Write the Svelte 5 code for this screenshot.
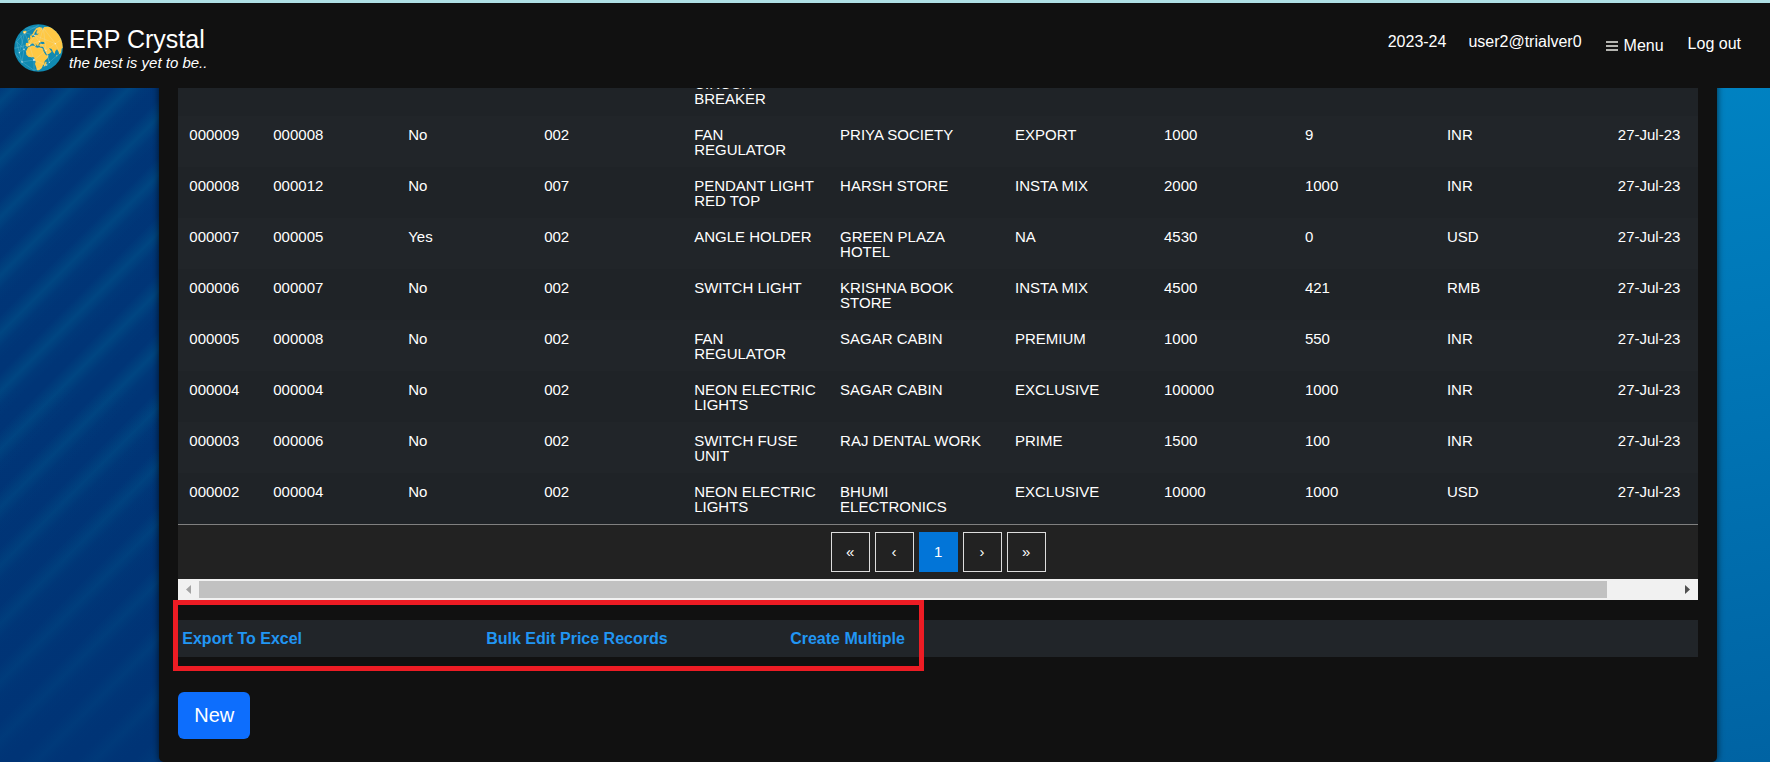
<script>
  const columns = [84, 135, 136, 150, 146, 175, 149, 141, 142, 171, 91];
  const total = columns.reduce((sum, width) => sum + width, 0);

  const rows = [
    ['', '', '', '', 'CIRCUIT BREAKER', '', '', '', '', '', ''],
    ['000009', '000008', 'No', '002', 'FAN REGULATOR', 'PRIYA SOCIETY', 'EXPORT', '1000', '9', 'INR', '27-Jul-23'],
    ['000008', '000012', 'No', '007', 'PENDANT LIGHT RED TOP', 'HARSH STORE', 'INSTA MIX', '2000', '1000', 'INR', '27-Jul-23'],
    ['000007', '000005', 'Yes', '002', 'ANGLE HOLDER', 'GREEN PLAZA HOTEL', 'NA', '4530', '0', 'USD', '27-Jul-23'],
    ['000006', '000007', 'No', '002', 'SWITCH LIGHT', 'KRISHNA BOOK STORE', 'INSTA MIX', '4500', '421', 'RMB', '27-Jul-23'],
    ['000005', '000008', 'No', '002', 'FAN REGULATOR', 'SAGAR CABIN', 'PREMIUM', '1000', '550', 'INR', '27-Jul-23'],
    ['000004', '000004', 'No', '002', 'NEON ELECTRIC LIGHTS', 'SAGAR CABIN', 'EXCLUSIVE', '100000', '1000', 'INR', '27-Jul-23'],
    ['000003', '000006', 'No', '002', 'SWITCH FUSE UNIT', 'RAJ DENTAL WORK', 'PRIME', '1500', '100', 'INR', '27-Jul-23'],
    ['000002', '000004', 'No', '002', 'NEON ELECTRIC LIGHTS', 'BHUMI ELECTRONICS', 'EXCLUSIVE', '10000', '1000', 'USD', '27-Jul-23']
  ];

  const pages = ['«', '‹', '1', '›', '»'];
  const actions = ['Export To Excel', 'Bulk Edit Price Records', 'Create Multiple'];
</script>

<header>
  <div class="brand">
    <svg class="logo" viewBox="42 72 147 144" aria-hidden="true">
      <defs>
        <clipPath id="globe"><ellipse cx="115.500" cy="144" rx="73" ry="71.500" /></clipPath>
      </defs>
      <g clip-path="url(#globe)">
        <rect x="42" y="72" width="147" height="144" fill="#118ab2" />
        <g fill="#ffc845">
          <path d="M70 93l8 -1 2 4 -5 5 -6 -2z" />
          <path d="M90 107l5 -2 1 6 4 6 -4 3 -7 0 2 -5z M84 113l4 0 0 5 -5 1z" />
          <path d="M97 103l5 -9 7 -9 9 -4 8 2 2 6 4 -8 12 -1 18 4 16 16 10 17 4 24 -7 5 -2 13 -5 4 -3 -9 -4 -6 -5 5 -2 9 -5 -6 -4 -9 -8 -3 4 6 4 5 -7 6 -7 3 -6 -10 -4 -9 -1 -5 -9 0 -4 -4 3 -5 8 1 6 -1 -2 -5 -8 -1 -5 3 -3 5 -1 6 -5 -4 -4 -5 3 7 -3 2 -7 -9 -6 2 -4 6 -8 2 -4 -4 1 -7 8 -1 -2 -6 5 -3 6 -4 3 -4 5 0 3 -6 6 -1 5 -3 -6 0 -2 -4 4 -8 -4 2 -5 8 -2 7 -5 1 -2 -5z" />
          <path d="M84 142l12 -5 9 0 1 4 7 3 4 -2 10 2 5 13 6 9 8 0 -3 8 -9 9 -1 9 -5 5 -3 8 -8 6 -6 0 -3 -11 -3 -8 2 -7 -4 -8 -1 -5 -7 0 -9 -1 -7 -7 -1 -10z" />
          <path d="M135 188l3 -4 2 4 -4 11 -4 0 0 -5z M170 164l2 2 -1 4 -2 -2z" />
        </g>
        <g fill="none" stroke="#d9f2fa" stroke-width="1" opacity="0.55">
          <path d="M50 125l24 -27 30 8 26 -22 M74 98l-16 60 30 -24 -14 -36 42 -22 M58 158l8 28 36 -6 -14 -46 M66 186l36 25 0 -31 38 15 M44 145l44 -11 50 17 28 -20 14 28 -32 28 -10 -36 -36 29 M104 106l34 45 -8 -67 36 47 18 -12 M50 125l8 33 M88 134l16 -28 M102 211l38 -16 8 -8 M130 84l-60 0 M45 160l21 26" />
          <path d="M62 105l10 43 -6 38 M72 148l30 32 M72 148l-22 -23 M104 106l62 25 M148 187l-10 -36 M88 134l30 -10 20 27 M118 124l12 -40" />
        </g>
        <g fill="#ffffff" opacity="0.75">
          <circle cx="74" cy="98" r="2" /><circle cx="58" cy="158" r="2" /><circle cx="66" cy="186" r="2" />
          <circle cx="88" cy="134" r="2" /><circle cx="104" cy="106" r="2" /><circle cx="102" cy="180" r="3" />
          <circle cx="138" cy="151" r="2" /><circle cx="166" cy="131" r="2" /><circle cx="118" cy="124" r="2" />
          <circle cx="148" cy="187" r="2" /><circle cx="72" cy="148" r="2" /><circle cx="140" cy="195" r="2" />
        </g>
      </g>
    </svg>
    <div class="titles">
      <span class="name">ERP Crystal</span>
      <em class="tagline">the best is yet to be..</em>
    </div>
  </div>
  <nav>
    <span>2023-24</span>
    <span>user2@trialver0</span>
    <button class="menu" type="button">
      <svg viewBox="0 0 12 10" aria-hidden="true">
        <path d="M0 1h12M0 5h12M0 9h12" stroke="#b4b4b0" stroke-width="2" />
      </svg>
      Menu
    </button>
    <a class="logout" href="#logout">Log out</a>
  </nav>
</header>

<main>
  <div class="grid">
    <table>
      <colgroup>
        {#each columns as width}
          <col style="width: {(width / total) * 100}%" />
        {/each}
      </colgroup>
      <tbody>
        {#each rows as row}
          <tr>
            {#each row as cell}
              <td>{cell}</td>
            {/each}
          </tr>
        {/each}
      </tbody>
    </table>
    <div class="pager">
      {#each pages as page}
        <button type="button" class:current={page === '1'}>{page}</button>
      {/each}
    </div>
    <div class="scrollbar">
      <svg viewBox="0 0 5 9" aria-hidden="true"><path d="M5 0v9L0 4.500z" fill="#a3a3a3" /></svg>
      <div class="track"><div class="thumb"></div></div>
      <svg viewBox="0 0 5 9" aria-hidden="true"><path d="M0 0v9L5 4.500z" fill="#505050" /></svg>
    </div>
  </div>

  <div class="actions">
    {#each actions as action}
      <a href="#action">{action}</a>
    {/each}
    <div class="highlight"></div>
  </div>

  <button class="new" type="button">New</button>
</main>

<style>
  :global(body) {
    margin: 0;
    min-height: 100vh;
    font-family: "Liberation Sans", Arial, sans-serif;
    font-size: 16px;
    color: #fff;
    background:
      linear-gradient(to bottom, transparent 50%, rgba(0, 52, 118, 0.7)) left / 50% 100% no-repeat,
      repeating-linear-gradient(135deg, rgba(0, 86, 140, 0.1) 0, transparent 8px 18px, rgba(0, 86, 140, 0.5) 31px, rgba(0, 86, 140, 0.1) 41px) left top / 50% 100% no-repeat,
      linear-gradient(#003678, #003476) left / 50% 100% no-repeat,
      linear-gradient(170deg, #008ccb, #0078b8 50%, #0063a3) right / 50% 100% no-repeat;
  }

  header {
    position: sticky;
    top: 0;
    z-index: 2;
    box-sizing: border-box;
    height: 88px;
    padding: 0 29px 0 14px;
    border-top: 3px solid #b0e0e6;
    background: #111;
    display: flex;
    justify-content: space-between;
    align-items: flex-start;
  }

  .brand {
    display: flex;
    gap: 6px;
    padding-top: 21px;
  }

  .logo {
    width: 49px;
    height: 48px;
  }

  .titles {
    display: flex;
    flex-direction: column;
  }

  .name {
    font-size: 25px;
    line-height: 30px;
  }

  .tagline {
    font-size: 15px;
    line-height: 18px;
  }

  nav {
    display: flex;
    gap: 22px;
    padding-top: 30px;
    line-height: 18px;
  }

  .menu {
    display: flex;
    align-items: center;
    gap: 6px;
    margin-top: 4px;
    padding: 0 2px;
    border: 0;
    background: none;
    color: inherit;
    font: inherit;
    line-height: 18px;
  }

  .menu svg {
    width: 12px;
    height: 10px;
  }

  .logout {
    margin-top: 2px;
    color: inherit;
    text-decoration: none;
  }

  main {
    box-sizing: border-box;
    margin: -23px 3% 0 9%;
    padding: 0 19px 23px;
    border-radius: 5px;
    background: #111;
    box-shadow: 0 0 7px rgba(0, 0, 0, 0.7);
  }

  table {
    width: 100%;
    table-layout: fixed;
    border-collapse: collapse;
    font-size: 15px;
    line-height: 15px;
  }

  td {
    height: 30px;
    padding: 11px 11px 10px;
    vertical-align: top;
    text-align: left;
    background: #1f2327;
  }

  tr:nth-child(even) td {
    background: #212529;
  }

  .pager {
    display: flex;
    justify-content: center;
    gap: 5px;
    padding: 7px 0;
    border-top: 1px solid #808080;
    background: #222;
  }

  .pager button {
    width: 39px;
    height: 40px;
    padding: 0 0 2px;
    border: 1px solid #ddd;
    background: none;
    color: #fff;
    font: inherit;
    font-size: 15px;
  }

  .pager .current {
    border-color: #0275d8;
    background: #0275d8;
  }

  .scrollbar {
    display: flex;
    align-items: center;
    gap: 8px;
    height: 21px;
    padding: 0 8px;
    background: #f1f1f1;
  }

  .scrollbar svg {
    width: 5px;
    height: 9px;
  }

  .track {
    flex: 1;
  }

  .thumb {
    width: 95.3%;
    height: 17px;
    background: #c1c1c1;
  }

  .actions {
    position: relative;
    display: grid;
    grid-template-columns: repeat(5, 1fr);
    margin-top: 20px;
    background: #212529;
    line-height: 37px;
  }

  .actions a {
    padding-left: 4px;
    color: #2196f3;
    font-weight: bold;
    text-decoration: none;
  }

  .highlight {
    position: absolute;
    top: -20px;
    bottom: -14px;
    left: -5px;
    box-sizing: border-box;
    width: 751px;
    border: 5px solid #ed1c24;
    pointer-events: none;
  }

  .new {
    display: block;
    margin-top: 35px;
    padding: 0 16px;
    border: 0;
    border-radius: 6px;
    background: #0d6efd;
    color: #fff;
    font: inherit;
    font-size: 20px;
    line-height: 47px;
  }
</style>
